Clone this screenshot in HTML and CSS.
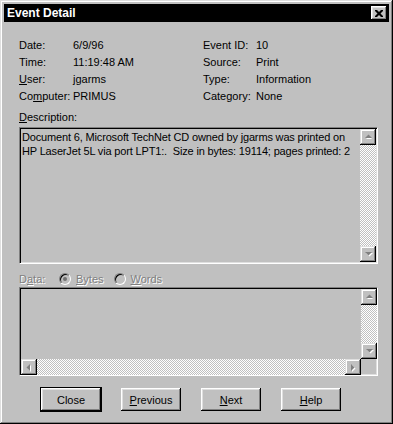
FILE: index.html
```html
<!DOCTYPE html>
<html lang="en">
<head>
  <meta charset="UTF-8" />
  <title>Event Detail</title>
  <link rel="stylesheet" href="styles.css">
</head>
<body>

  <div class="window">
    <div class="titlebar">
      <span class="title">Event Detail</span>
      <button class="close-btn" aria-label="Close">
        <svg width="8" height="7" viewBox="0 0 8 7">
          <path d="M0 0h2l2 2 2-2h2v1l-2.5 2.5L8 6v1H6L4 5 2 7H0V6l2.5-2.5L0 1z" fill="#000"/>
        </svg>
      </button>
    </div>

    <div class="content">
      <div class="fields">
        <div class="col">
          <span class="lbl">Date:</span><span>6/9/96</span>
          <span class="lbl">Time:</span><span>11:19:48 AM</span>
          <span class="lbl"><u>U</u>ser:</span><span>jgarms</span>
          <span class="lbl">Co<u>m</u>puter:</span><span>PRIMUS</span>
        </div>
        <div class="col">
          <span class="lbl">Event ID:</span><span>10</span>
          <span class="lbl">Source:</span><span>Print</span>
          <span class="lbl">Type:</span><span>Information</span>
          <span class="lbl">Category:</span><span>None</span>
        </div>
      </div>

      <div class="desc-label"><u>D</u>escription:</div>
      <div class="box desc-box">
        <div class="desc-text">Document 6, Microsoft TechNet CD owned by jgarms was printed on<br>HP LaserJet 5L via port LPT1:.&nbsp; Size in bytes: 19114; pages printed: 2</div>
        <div class="vscroll">
          <div class="arrow-btn">
            <svg width="9" height="6" viewBox="0 0 9 6"><path d="M2 5h6L5 2z" fill="#fff"/><path d="M1 4h7L4.5 0.5z" fill="#808080"/></svg>
          </div>
          <div class="track"></div>
          <div class="arrow-btn">
            <svg width="9" height="6" viewBox="0 0 9 6"><path d="M2 2h7L5.5 5.5z" fill="#fff"/><path d="M1 1h7L4.5 4.5z" fill="#808080"/></svg>
          </div>
        </div>
      </div>

      <div class="data-row">
        <span class="disabled data-lbl">D<u>a</u>ta:</span>
        <span class="radio checked"></span>
        <span class="disabled radio-txt"><u>B</u>ytes</span>
        <span class="radio"></span>
        <span class="disabled radio-txt"><u>W</u>ords</span>
      </div>
      <div class="box data-box">
        <div class="data-area"></div>
        <div class="vscroll">
          <div class="arrow-btn">
            <svg width="9" height="6" viewBox="0 0 9 6"><path d="M2 5h6L5 2z" fill="#fff"/><path d="M1 4h7L4.5 0.5z" fill="#808080"/></svg>
          </div>
          <div class="track"></div>
          <div class="arrow-btn">
            <svg width="9" height="6" viewBox="0 0 9 6"><path d="M2 2h7L5.5 5.5z" fill="#fff"/><path d="M1 1h7L4.5 4.5z" fill="#808080"/></svg>
          </div>
        </div>
        <div class="hscroll">
          <div class="arrow-btn">
            <svg width="6" height="9" viewBox="0 0 6 9"><path d="M5 2v7L1.5 5.5z" fill="#fff"/><path d="M4 1v7L0.5 4.5z" fill="#808080"/></svg>
          </div>
          <div class="track"></div>
          <div class="arrow-btn">
            <svg width="6" height="9" viewBox="0 0 6 9"><path d="M2 2v7l3.5-3.5z" fill="#fff"/><path d="M1 1v7l3.5-3.5z" fill="#808080"/></svg>
          </div>
        </div>
        <div class="corner"></div>
      </div>

      <div class="buttons">
        <button class="btn default">Close</button>
        <button class="btn"><u>P</u>revious</button>
        <button class="btn"><u>N</u>ext</button>
        <button class="btn"><u>H</u>elp</button>
      </div>
    </div>
  </div>

</body>
</html>
```

FILE: styles.css
```css
body {
  margin: 0;
  background-color: #c0c0c0;
  font-family: "Liberation Sans", Arial, sans-serif;
  font-size: 11px;
  color: #000;
}
u {
  text-decoration: underline;
  text-underline-offset: 1px;
}
.window {
  width: 393px;
  height: 424px;
  box-sizing: border-box;
  padding: 4px;
  background-color: #c0c0c0;
  box-shadow: inset -1px -1px #000, inset 1px 1px #dfdfdf, inset -2px -2px #808080, inset 2px 2px #fff;
}
.titlebar {
  height: 18px;
  background-color: #000;
  display: flex;
  align-items: center;
  justify-content: space-between;
  padding-left: 3px;
}
.title {
  color: #fff;
  font-weight: bold;
  font-size: 12px;
}
.close-btn {
  width: 16px;
  height: 14px;
  margin-right: 2px;
  padding: 0;
  border: none;
  background-color: #c0c0c0;
  box-shadow: inset -1px -1px #000, inset 1px 1px #fff, inset -2px -2px #808080, inset 2px 2px #dfdfdf;
  display: flex;
  align-items: center;
  justify-content: center;
}
.content {
  padding: 15px 11px 0 15px;
}
.fields {
  display: grid;
  grid-template-columns: 184px 1fr;
  line-height: 17px;
}
.col {
  display: grid;
  grid-template-columns: 54px 1fr;
}
.col + .col {
  grid-template-columns: 53px 1fr;
}
.desc-label {
  margin-top: 4px;
  line-height: 17px;
}
.box {
  width: 359px;
  box-sizing: border-box;
  margin-top: 1px;
  border: 1px solid;
  border-color: #808080 #fff #fff #808080;
  box-shadow: inset 1px 1px #000, inset -1px -1px #dfdfdf;
  background-color: #c0c0c0;
}
.desc-box {
  height: 137px;
  display: flex;
}
.desc-text {
  flex: 1;
  padding: 2px 2px;
  line-height: 14px;
  letter-spacing: -0.16px;
  white-space: nowrap;
}
.vscroll {
  width: 16px;
  display: flex;
  flex-direction: column;
  margin: 1px 1px 1px 0;
}
.hscroll {
  height: 16px;
  display: flex;
  margin: 0 0 1px 1px;
}
.track {
  flex: 1;
  background: repeating-conic-gradient(#fff 0 25%, #c0c0c0 0 50%) 0 0 / 2px 2px;
}
.arrow-btn {
  width: 16px;
  height: 16px;
  flex: none;
  box-sizing: border-box;
  background-color: #c0c0c0;
  box-shadow: inset -1px -1px #000, inset 1px 1px #dfdfdf, inset -2px -2px #808080, inset 2px 2px #fff;
  display: flex;
  align-items: center;
  justify-content: center;
}
.data-row {
  margin-top: 6px;
  height: 17px;
  display: flex;
  align-items: center;
}
.disabled {
  color: #808080;
  text-shadow: 1px 1px #fff;
}
.data-lbl {
  width: 40px;
}
.radio {
  width: 12px;
  height: 12px;
  box-sizing: border-box;
  border-radius: 50%;
  border: 1px solid;
  border-color: #808080 #fff #fff #808080;
  background-color: #c0c0c0;
  box-shadow: inset 1px 1px #000;
  margin-right: 5px;
  display: flex;
  align-items: center;
  justify-content: center;
}
.radio.checked::after {
  content: "";
  width: 4px;
  height: 4px;
  border-radius: 50%;
  background-color: #707070;
}
.radio-txt {
  margin-right: 10px;
}
.data-box {
  height: 89px;
  margin-top: 0;
  display: grid;
  grid-template-columns: 1fr 16px;
  grid-template-rows: 1fr 16px;
}
.data-box .vscroll {
  margin: 1px 1px 0 0;
}
.corner {
  background-color: #c0c0c0;
  margin: 0 1px 1px 0;
}
.buttons {
  margin-top: 12px;
  padding-left: 22px;
  display: flex;
  gap: 20px;
}
.btn {
  width: 60px;
  height: 23px;
  padding: 0;
  border: none;
  font-family: "Liberation Sans", Arial, sans-serif;
  font-size: 11px;
  color: #000;
  background-color: #c0c0c0;
  box-shadow: inset -1px -1px #000, inset 1px 1px #fff, inset -2px -2px #808080, inset 2px 2px #dfdfdf;
}
.btn.default {
  outline: 1px solid #000;
  outline-offset: 0;
  box-shadow: inset -1px -1px #000, inset 1px 1px #fff, inset -2px -2px #808080, inset 2px 2px #dfdfdf;
}
```
